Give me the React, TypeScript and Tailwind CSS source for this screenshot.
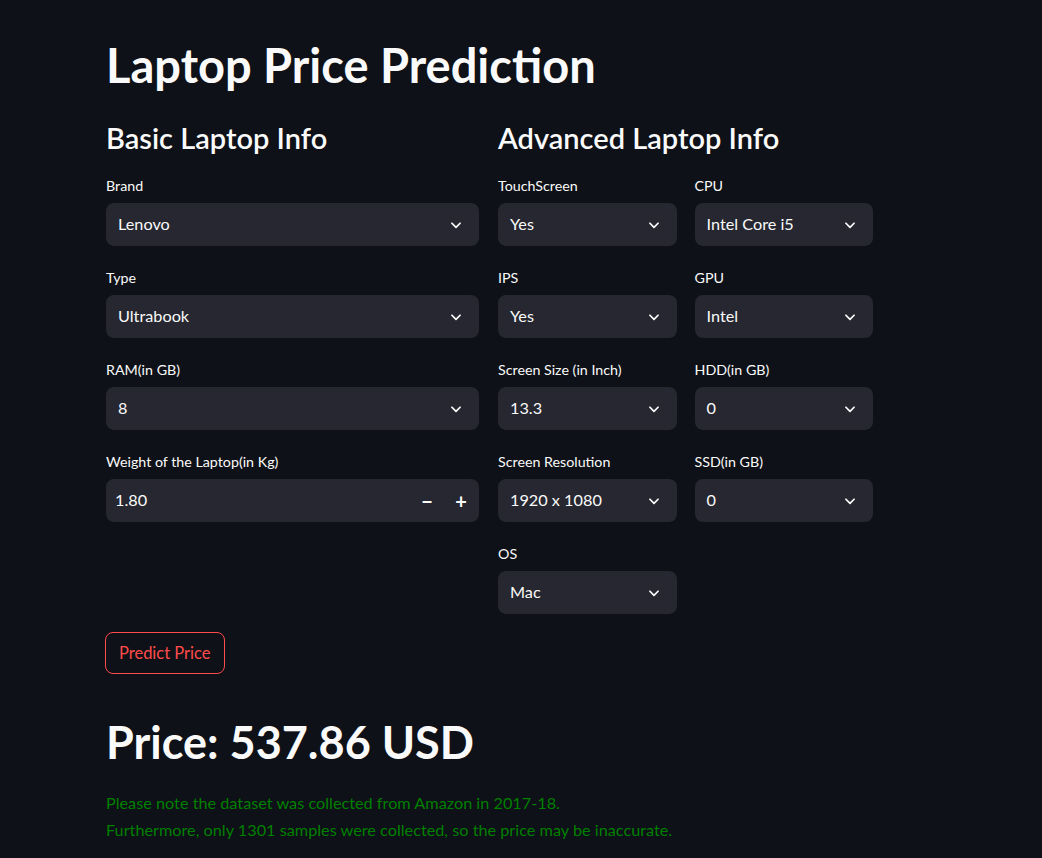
import React from "react";

const FONT = { fontFamily: "Lato, 'Noto Sans', sans-serif" };

function Chevron() {
  return (
    <svg width="14" height="14" viewBox="0 0 24 24" aria-hidden className="text-[#fafafa]">
      <path d="M5 9l7 7 7-7" stroke="currentColor" strokeWidth="3" fill="none" strokeLinecap="round" strokeLinejoin="round" />
    </svg>
  );
}

function Select({ label, value }: { label: string; value: string }) {
  return (
    <div className="flex flex-col">
      <label className="text-[14.25px] leading-[20px] mb-[7px]">{label}</label>
      <div className="h-[43px] rounded-lg bg-[#262730] flex items-center justify-between pl-3 pr-4 text-[16.25px]">
        <span>{value}</span>
        <Chevron />
      </div>
    </div>
  );
}

function NumberInput({ label, value }: { label: string; value: string }) {
  return (
    <div className="flex flex-col">
      <label className="text-[14.25px] leading-[20px] mb-[7px]">{label}</label>
      <div className="h-[43px] rounded-lg bg-[#262730] flex items-center text-[16.25px]">
        <span className="flex-1 pl-[9px]">{value}</span>
        <span className="w-[34px] text-center text-[20px] font-bold">−</span>
        <span className="w-[34px] text-center text-[20px] font-bold mr-[1px]">+</span>
      </div>
    </div>
  );
}

export default function App() {
  return (
    <div className="min-h-screen bg-[#0e1117] text-[#fafafa]" style={FONT}>
      <div className="w-[767px] ml-[106px] pt-[38px] pb-6">
        <h1 className="text-[47px] leading-[54px] font-bold">Laptop Price Prediction</h1>

        <div className="grid grid-cols-[373px_1fr] gap-x-[19px] mt-[29px]">
          <div className="flex flex-col">
            <h3 className="text-[29px] leading-[34px] font-semibold mb-[21px]">Basic Laptop Info</h3>
            <div className="flex flex-col gap-[22px]">
              <Select label="Brand" value="Lenovo" />
              <Select label="Type" value="Ultrabook" />
              <Select label="RAM(in GB)" value="8" />
              <NumberInput label="Weight of the Laptop(in Kg)" value="1.80" />
            </div>
          </div>
          <div className="flex flex-col">
            <h3 className="text-[29px] leading-[34px] font-semibold mb-[21px]">Advanced Laptop Info</h3>
            <div className="grid grid-cols-2 gap-x-[18px]">
              <div className="flex flex-col gap-[22px]">
                <Select label="TouchScreen" value="Yes" />
                <Select label="IPS" value="Yes" />
                <Select label="Screen Size (in Inch)" value="13.3" />
                <Select label="Screen Resolution" value="1920 x 1080" />
                <Select label="OS" value="Mac" />
              </div>
              <div className="flex flex-col gap-[22px]">
                <Select label="CPU" value="Intel Core i5" />
                <Select label="GPU" value="Intel" />
                <Select label="HDD(in GB)" value="0" />
                <Select label="SSD(in GB)" value="0" />
              </div>
            </div>
          </div>
        </div>

        <button className="-ml-px mt-[18px] h-[42px] px-[13px] rounded-lg border border-[#ff4b4b] text-[#ff4b4b] text-[16.5px] bg-transparent">
          Predict Price
        </button>

        <h1 className="mt-[42px] text-[45px] leading-[53px] font-bold">Price: 537.86 USD</h1>

        <div className="mt-[20px] text-[16.25px] leading-[27px] text-[#008000]">
          <p>Please note the dataset was collected from Amazon in 2017-18.</p>
          <p>Furthermore, only 1301 samples were collected, so the price may be inaccurate.</p>
        </div>
      </div>
    </div>
  );
}
